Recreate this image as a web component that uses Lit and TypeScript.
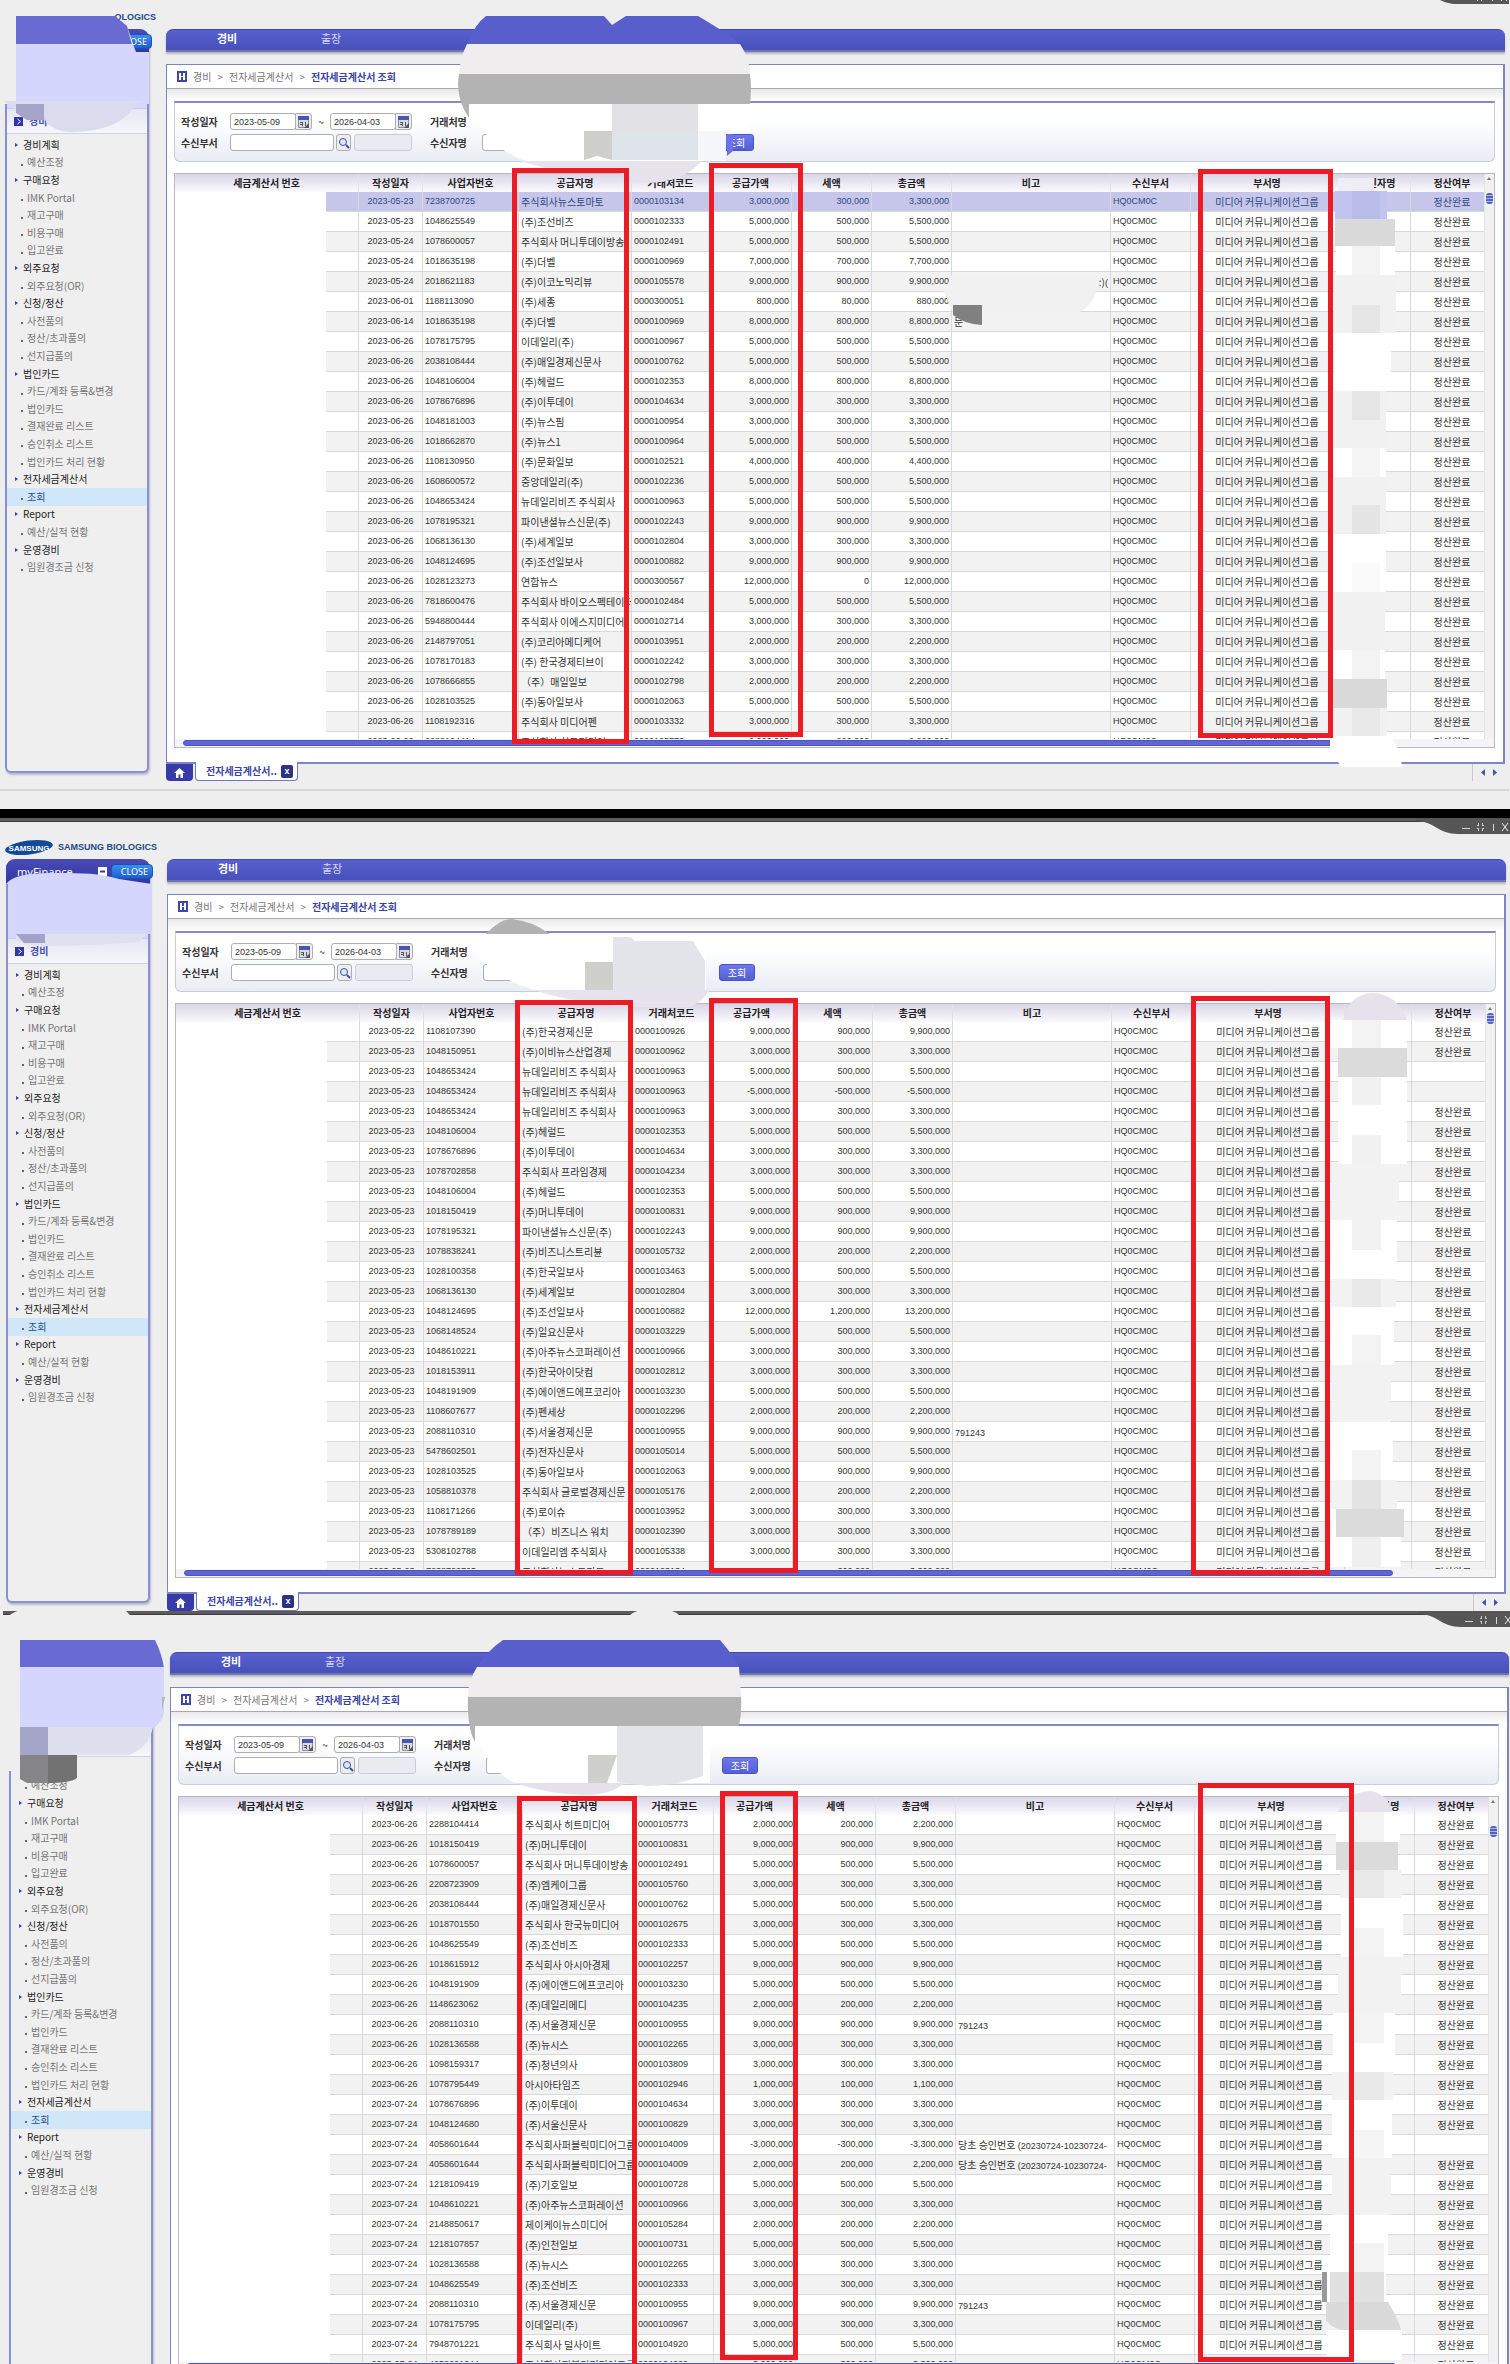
import { LitElement, html, css, svg, nothing } from "lit";
import { customElement, property } from "lit/decorators.js";
import { classMap } from "lit/directives/class-map.js";
import { styleMap } from "lit/directives/style-map.js";

interface Invoice {
  date: string;
  biz: string;
  name: string;
  code: string;
  supply: number;
  tax: number;
  note: string;
  noteEnd: boolean;
  settled: boolean;
}

const parse = (text: string): Invoice[] =>
  text
    .trim()
    .split("\n")
    .map((line) => {
      const [date, biz, name, code, amount, note = "", flag = ""] = line.split("|");
      const supply = Number(amount) * 1000;
      return {
        date: `2023-${date}`,
        biz,
        name,
        code: `0000${code}`,
        supply,
        tax: flag.includes("free") ? 0 : supply / 10,
        note,
        noteEnd: flag.includes("end"),
        settled: !flag.includes("open"),
      };
    });

const FIRST = parse(`
05-23|7238700725|주식회사뉴스토마토|103134|3000
05-23|1048625549|(주)조선비즈|102333|5000
05-24|1078600057|주식회사 머니투데이방송|102491|5000
05-24|1018635198|(주)더벨|100969|7000
05-24|2018621183|(주)이코노믹리뷰|105578|9000|:)(|end
06-01|1188113090|(주)세종|300051|800
06-14|1018635198|(주)더벨|100969|8000|문
06-26|1078175795|이데일리(주)|100967|5000
06-26|2038108444|(주)매일경제신문사|100762|5000
06-26|1048106004|(주)헤럴드|102353|8000
06-26|1078676896|(주)이투데이|104634|3000
06-26|1048181003|(주)뉴스핌|100954|3000
06-26|1018662870|(주)뉴스1|100964|5000
06-26|1108130950|(주)문화일보|102521|4000
06-26|1608600572|중앙데일리(주)|102236|5000
06-26|1048653424|뉴데일리비즈 주식회사|100963|5000
06-26|1078195321|파이낸셜뉴스신문(주)|102243|9000
06-26|1068136130|(주)세계일보|102804|3000
06-26|1048124695|(주)조선일보사|100882|9000
06-26|1028123273|연합뉴스|300567|12000||free
06-26|7818600476|주식회사 바이오스펙테이터|102484|5000
06-26|5948800444|주식회사 이에스지미디어|102714|3000
06-26|2148797051|(주)코리아메디케어|103951|2000
06-26|1078170183|(주) 한국경제티브이|102242|3000
06-26|1078666855|（주）매일일보|102798|2000
06-26|1028103525|(주)동아일보사|102063|5000
06-26|1108192316|주식회사 미디어펜|103332|3000
06-26|2288104414|주식회사 히트미디어|105773|2000
`);

const SECOND = parse(`
05-22|1108107390|(주)한국경제신문|100926|9000
05-23|1048150951|(주)이비뉴스산업경제|100962|3000
05-23|1048653424|뉴데일리비즈 주식회사|100963|5000||open
05-23|1048653424|뉴데일리비즈 주식회사|100963|-5000||open
05-23|1048653424|뉴데일리비즈 주식회사|100963|3000
05-23|1048106004|(주)헤럴드|102353|5000
05-23|1078676896|(주)이투데이|104634|3000
05-23|1078702858|주식회사 프라임경제|104234|3000
05-23|1048106004|(주)헤럴드|102353|5000
05-23|1018150419|(주)머니투데이|100831|9000
05-23|1078195321|파이낸셜뉴스신문(주)|102243|9000
05-23|1078838241|(주)비즈니스트리뷴|105732|2000
05-23|1028100358|(주)한국일보사|103463|5000
05-23|1068136130|(주)세계일보|102804|3000
05-23|1048124695|(주)조선일보사|100882|12000
05-23|1068148524|(주)일요신문사|103229|5000
05-23|1048610221|(주)아주뉴스코퍼레이션|100966|3000
05-23|1018153911|(주)한국아이닷컴|102812|3000
05-23|1048191909|(주)에이앤드에프코리아|103230|5000
05-23|1108607677|(주)펜세상|102296|2000
05-23|2088110310|(주)서울경제신문|100955|9000|791243
05-23|5478602501|(주)전자신문사|105014|5000
05-23|1028103525|(주)동아일보사|102063|9000
05-23|1058810378|주식회사 글로벌경제신문|105176|2000
05-23|1108171266|(주)로이슈|103952|3000
05-23|1078789189|（주）비즈니스 워치|102390|3000
05-23|5308102788|이데일리엠 주식회사|105338|3000
05-23|7238700725|주식회사뉴스토마토|103134|3000
`);

const THIRD = parse(`
06-26|2288104414|주식회사 히트미디어|105773|2000
06-26|1018150419|(주)머니투데이|100831|9000
06-26|1078600057|주식회사 머니투데이방송|102491|5000
06-26|2208723909|(주)엠케이그룹|105760|3000
06-26|2038108444|(주)매일경제신문사|100762|5000
06-26|1018701550|주식회사 한국뉴미디어|102675|3000
06-26|1048625549|(주)조선비즈|102333|5000
06-26|1018615912|주식회사 아시아경제|102257|9000
06-26|1048191909|(주)에이앤드에프코리아|103230|5000
06-26|1148623062|(주)데일리메디|104235|2000
06-26|2088110310|(주)서울경제신문|100955|9000|791243
06-26|1028136588|(주)뉴시스|102265|3000
06-26|1098159317|(주)청년의사|103809|3000
06-26|1078795449|아시아타임즈|102946|1000
07-24|1078676896|(주)이투데이|104634|3000
07-24|1048124680|(주)서울신문사|100829|3000
07-24|4058601644|주식회사퍼블릭미디어그룹|104009|-3000|당초 승인번호 (20230724-10230724-|open
07-24|4058601644|주식회사퍼블릭미디어그룹|104009|2000|당초 승인번호 (20230724-10230724-
07-24|1218109419|(주)기호일보|100728|5000
07-24|1048610221|(주)아주뉴스코퍼레이션|100966|3000
07-24|2148850617|제이케이뉴스미디어|105284|2000
07-24|1218107857|(주)인천일보|100731|5000
07-24|1028136588|(주)뉴시스|102265|3000
07-24|1048625549|(주)조선비즈|102333|3000
07-24|2088110310|(주)서울경제신문|100955|9000|791243
07-24|1078175795|이데일리(주)|100967|3000
07-24|7948701221|주식회사 덜사이트|104920|5000
07-24|4058601644|주식회사퍼블릭미디어그룹|104009|3000
`);

const MENU: Array<[string, string[]]> = [
  ["경비계획", ["예산조정"]],
  ["구매요청", ["IMK Portal", "재고구매", "비용구매", "입고완료"]],
  ["외주요청", ["외주요청(OR)"]],
  ["신청/정산", ["사전품의", "정산/초과품의", "선지급품의"]],
  ["법인카드", ["카드/계좌 등록&변경", "법인카드", "결재완료 리스트", "승인취소 리스트", "법인카드 처리 현황"]],
  ["전자세금계산서", ["조회"]],
  ["Report", ["예산/실적 현황"]],
  ["운영경비", ["임원경조금 신청"]],
];

const COLUMNS = [
  "세금계산서 번호", "작성일자", "사업자번호", "공급자명", "거래처코드", "공급가액",
  "세액", "총금액", "비고", "수신부서", "부서명", "수신자명", "정산여부",
];

const money = (n: number) => n.toLocaleString("en-US");

/* Digits in a remark take the compact numeral size, the words keep theirs. */
const remark = (note: string) => {
  const [, words, digits] = /^([^\d(]*)(.*)$/.exec(note)!;
  return html`${words}${digits ? html`<span class="fig">${digits}</span>` : nothing}`;
};

@customElement("finance-window")
export class FinanceWindow extends LitElement {
  @property({ attribute: false }) rows: Invoice[] = [];
  @property({ type: Number }) selected = -1;
  @property({ type: Number }) thumb = 10;
  @property({ type: Boolean }) invert = false;
  @property({ type: Boolean }) status = false;

  static styles = css`
    :host {
      display: block;
      position: relative;
      background: #eeeeee;
      color: #333;
      font: 10px/20px "Noto Sans CJK KR", sans-serif;
      --line: #d9d9d9;
    }
    * { box-sizing: border-box; }
    a { color: inherit; text-decoration: none; }
    .strip { height: 4px; background: #5c5c5c; border-bottom: 1px solid #3c3c3c; }
    .controls { position: absolute; top: 0; right: 0; width: 94px; height: 16px; }
    .layout { display: flex; align-items: flex-start; gap: 17px; padding: 0 4px 0 6px; }
    .side { flex: none; width: 144px; }
    .brand { display: flex; align-items: center; gap: 5px; height: 37px; padding-top: 13px; color: #1b4a87; font: 700 9px/16px "Liberation Sans", sans-serif; white-space: nowrap; }
    .brand svg { flex: none; margin-left: -1px; }
    .panel { height: 744px; border: 2px solid #8b90d6; border-top: 0; border-radius: 9px 9px 6px 6px; background: #efefef; box-shadow: 1px 2px 2px #b9b9cc; }
    .head { display: flex; align-items: center; gap: 4px; height: 25px; margin: 0 -2px; padding: 0 0 0 11px; border-radius: 9px 9px 0 0; background: linear-gradient(#4a4cb4, #2f35a4); color: #fff; font: 11px/20px "Noto Sans", sans-serif; }
    .head .grow { flex: 1; }
    .close { height: 15px; margin-right: -3px; padding: 0 4px 0 9px; border: 1px solid #1b50b8; border-radius: 4px; background: linear-gradient(#3f8df0, #1c5fd0); color: #fff; font: 9px/12px "Noto Sans", sans-serif; }
    .greet { height: 54px; background: #d5d7fe; }
    .section { display: flex; align-items: center; gap: 6px; height: 26px; padding-left: 7px; border-top: 1px solid #cccde4; border-bottom: 1px solid #cfd3e2; background: linear-gradient(#e6e6f4, #f6f6fb); color: #4650b0; font-weight: 700; }
    .menu { display: grid; grid-auto-rows: 1fr; height: 440px; margin: 2px 0 0; padding: 0; list-style: none; }
    .menu li { display: flex; align-items: center; padding-left: 20px; color: #757575; line-height: 16px; }
    .menu li::before { content: ""; width: 2px; height: 2px; margin: 5px 4px 0 -6px; background: #666; }
    .menu li.top { padding-left: 16px; color: #222; }
    .menu li.top::before { width: 0; height: 0; margin: 0 5px 0 -8px; border: 2px solid transparent; border-left: 3px solid #3a3fae; border-right: 0; background: none; }
    .menu li.on { background: #cfe7f8; color: #1f4b8f; }
    .main { flex: 1; min-width: 0; padding-top: 37px; }
    .nav { display: flex; height: 23px; padding-left: 51px; border-top: 1px solid #4349a8; border-bottom: 2px solid #6f74b4; border-radius: 7px 7px 0 0; background: linear-gradient(#5860cf, #4850ba); box-shadow: 0 2px 2px #b5b5bd; color: #d8daf6; font-size: 11px; line-height: 17px; }
    .nav a { width: 104px; }
    .nav a.on { color: #fff; font-weight: 700; }
    .frame { margin-top: 12px; height: 700px; border: 1px solid #7f84c2; border-width: 1px 2px 2px 1px; background: #fff; }
    .crumbs { display: flex; align-items: center; gap: 6px; height: 24px; padding-left: 10px; border-bottom: 1px solid #a9a9ad; color: #777; }
    .crumbs b { color: #3a43a5; }
    .content { padding: 12px 8px 0 7px; background: linear-gradient(#e9e9eb, #fff 12px); }
    .search { display: grid; grid-template-columns: 49px 182px 70px 223px auto; grid-auto-rows: 17px; row-gap: 4px; align-items: center; height: 61px; padding: 10px 0 0 6px; border: 1px solid #c9ccda; border-top: 2px solid #858ac0; border-radius: 0 0 6px 6px; background: linear-gradient(#fff 30%, #e9ecf4); }
    .search label { font-weight: 700; }
    .search .second { padding-left: 18px; }
    .field { display: flex; align-items: center; height: 17px; }
    input { width: 66px; height: 17px; margin: 0; padding: 0 3px; border: 1px solid #adadb3; border-radius: 3px; background: #fff; color: #333; font: 9px/14px "Liberation Sans", sans-serif; }
    input:disabled { width: 58px; margin-left: 3px; border-color: #c9ccd6; background: #e9ebf0; }
    input.wide { width: 104px; }
    input.long { width: 223px; }
    .icon { display: flex; align-items: center; justify-content: center; width: 17px; height: 17px; margin-left: -1px; padding: 0; border: 1px solid #adadb3; border-radius: 0 3px 3px 0; background: #eee; }
    .icon.find { width: 16px; margin-left: 2px; border-radius: 3px; }
    .tilde { width: 18px; text-align: center; }
    .go { justify-self: start; width: 36px; height: 17px; margin-left: 13px; padding: 0; border: 1px solid #4a53c4; border-radius: 3px; background: linear-gradient(#6d78ea, #5560d8); color: #fff; font: 10px/14px "Noto Sans CJK KR", sans-serif; }
    .gridbox { position: relative; margin-top: 11px; border: 1px solid #b8b8c4; }
    .viewport { height: 565px; overflow: hidden; }
    table { width: 100%; table-layout: fixed; border-collapse: separate; border-spacing: 0; }
    th { height: 18px; padding: 0; border-right: 1px solid #e3e0ec; background: linear-gradient(#d9d5e8, #fbfafd); color: #222; font-weight: 700; line-height: 18px; }
    td { height: 20px; padding: 0 2px; overflow: hidden; border-right: 1px solid var(--line); border-bottom: 1px solid var(--line); line-height: 19px; white-space: nowrap; }
    td.mid { padding: 0; text-align: center; }
    td.num { text-align: right; }
    .num, .fig { font-family: "Liberation Sans", sans-serif; font-size: 9px; }
    span.fig { line-height: 10px; }
    td.end { text-align: right; }
    td.no { border-bottom: 0; background: linear-gradient(#fff, #fff) 0 0 / 151px 100% no-repeat, linear-gradient(var(--line), var(--line)) 0 100% / 100% 1px no-repeat; }
    tr.alt { background: #f2f2f2; }
    tr.sel { background: #c5c6e9; color: #2f4684; }
    .w-no { width: 184px; } .w-date { width: 64px; } .w-biz { width: 96px; } .w-name { width: 113px; }
    .w-code { width: 78px; } .w-sup { width: 82px; } .w-amt { width: 80px; } .w-dept { width: 80px; }
    .w-group { width: 153px; } .w-recv { width: 67px; } .w-state { width: 83px; }
    .vbar { position: absolute; top: 0; right: 0; bottom: 8px; width: 10px; padding-top: 9px; background: #f1f1f1; border-left: 1px solid #e4e4e4; }
    .vbar::before { content: ""; position: absolute; top: 3px; left: 2px; border: 2px solid transparent; border-bottom: 3px solid #777; border-top: 0; }
    .vthumb { width: 7px; height: 11px; margin-left: 1px; border-radius: 3px; background: repeating-linear-gradient(#4f63c0 0 2px, #aab4ea 2px 3px); }
    .hbar { display: flex; height: 8px; padding: 1px 102px 1px 8px; background: #f4f4f6; }
    .hthumb { flex: 1; border-radius: 3px; background: #5f66d4; border: 1px solid #4d54c0; }
    .tabs { display: flex; align-items: stretch; height: 17px; }
    .home { display: flex; align-items: center; justify-content: center; width: 27px; border-radius: 0 0 4px 4px; background: #363ba8; }
    .tab { display: flex; align-items: center; gap: 4px; margin-top: -2px; margin-left: 2px; padding: 0 4px 0 10px; border: 1px solid #7277b8; border-top: 0; border-radius: 0 0 4px 4px; background: #fff; color: #3a43a5; font-weight: 700; }
    .x { width: 12px; height: 13px; padding: 0; border: 0; border-radius: 2px; background: #2c3284; color: #fff; font: 700 9px/13px "Liberation Sans", sans-serif; }
    .pager { display: flex; align-items: center; gap: 8px; margin-left: auto; padding: 0 8px; border-left: 1px solid #c9c9c9; }
    .status { height: 20px; margin-top: 8px; border-top: 2px solid #d7d7d7; }
  `;

  private calendar(label: string) {
    return html`<button class="icon" type="button" aria-label=${label}>
      <svg width="11" height="12" viewBox="0 0 11 12">
        <path fill="#d8dae4" stroke="#8a8da0" d="M.5.5h10v11H.5z" />
        <path fill="#4a55ad" d="M0 0h11v4H0z" />
        <path stroke="#555" d="M2 6.500h3M4.500 6v4M2 8.500h2M7.500 6v4" />
        <path fill="#555" d="M11 7v5H6z" />
      </svg>
    </button>`;
  }

  private row(r: Invoice, i: number) {
    const alt = i !== this.selected && i % 2 === (this.invert ? 0 : 1);
    return html`<tr class=${classMap({ alt, sel: i === this.selected })}>
      <td class="no"></td>
      <td class="mid fig">${r.date}</td>
      <td class="fig">${r.biz}</td>
      <td>${r.name}</td>
      <td class="fig">${r.code}</td>
      <td class="num">${money(r.supply)}</td>
      <td class="num">${money(r.tax)}</td>
      <td class="num">${money(r.supply + r.tax)}</td>
      <td class=${classMap({ end: r.noteEnd })}>${r.note ? remark(r.note) : nothing}</td>
      <td class="fig">HQ0CM0C</td>
      <td class="mid">미디어 커뮤니케이션그룹</td>
      <td></td>
      <td class="mid">${r.settled ? "정산완료" : nothing}</td>
    </tr>`;
  }

  render() {
    return html`
      <div class="strip"></div>
      <svg class="controls" viewBox="0 0 94 16" aria-hidden="true">
        <path fill="#565656" d="M0 3c18 0 22 13 42 13h52V0H0z" />
        <path stroke="#d5d5d5" d="M46 10.500h8M77.500 6v7" />
        <path stroke="#c9c9c9" d="M62.500 5v3M62.500 10v3M66.500 5v3M66.500 10v3M61 7.500h2M66 7.500h2M61 10.500h2M66 10.500h2" />
        <path stroke="#eee" d="M86 5l6 8M92 5l-6 8" />
      </svg>
      <div class="layout">
        <div class="side">
          <div class="brand">
            <svg width="48" height="17" viewBox="0 0 48 17">
              <ellipse cx="24" cy="8.500" rx="24" ry="7" fill="#134a97" transform="rotate(-7 24 8.500)" />
              <text x="24" y="11.500" text-anchor="middle" fill="#fff" font-family="Liberation Sans" font-weight="700" font-size="8">SAMSUNG</text>
            </svg>
            <span>SAMSUNG BIOLOGICS</span>
          </div>
          <aside class="panel">
            <div class="head">
              <span>myFinance</span><span class="grow"></span>
              <svg width="9" height="9"><path fill="#fff" d="M0 0h9v9H0z" /><path stroke="#333a9c" stroke-width="2" d="M2 4.500h5" /></svg>
              <button class="close" type="button">CLOSE</button>
            </div>
            <div class="greet"></div>
            <div class="section">
              <svg width="9" height="9"><path fill="#3137a8" d="M0 0h9v9H0z" /><path fill="none" stroke="#fff" d="M3.500 2l3 2.500-3 2.500" /></svg>
              <span>경비</span>
            </div>
            <ul class="menu">
              ${MENU.map(
                ([title, items]) => html`
                  <li class="top"><a href="#">${title}</a></li>
                  ${items.map((t) => html`<li class=${classMap({ on: t === "조회" })}><a href="#">${t}</a></li>`)}
                `,
              )}
            </ul>
          </aside>
        </div>
        <main class="main">
          <nav class="nav"><a class="on" href="#">경비</a><a href="#">출장</a></nav>
          <section class="frame">
            <div class="crumbs">
              <svg width="10" height="11"><path fill="#3f48a8" d="M0 0h10v11H0z" /><path stroke="#fff" stroke-width="2" d="M3 2v7M7 2v7" /><path stroke="#fff" d="M3 5.500h4" /></svg>
              <a href="#">경비</a><span>&gt;</span><a href="#">전자세금계산서</a><span>&gt;</span><b>전자세금계산서 조회</b>
            </div>
            <div class="content">
              <form class="search">
                <label for="from">작성일자</label>
                <div class="field">
                  <input id="from" value="2023-05-09" />${this.calendar("시작일 선택")}
                  <span class="tilde">~</span>
                  <input aria-label="종료일" value="2026-04-03" />${this.calendar("종료일 선택")}
                </div>
                <label class="second" for="vendor">거래처명</label>
                <div class="field"><input class="long" id="vendor" /></div>
                <span></span>
                <label for="dept">수신부서</label>
                <div class="field">
                  <input class="wide" id="dept" />
                  <button class="icon find" aria-label="부서 검색" type="button">
                    <svg width="12" height="12"><circle cx="5" cy="5" r="3.500" fill="#dfe8fb" stroke="#3c4fa0" /><path stroke="#3c4fa0" stroke-width="2" d="M8 8l3 3" /></svg>
                  </button>
                  <input aria-label="부서명" disabled />
                </div>
                <label class="second" for="recv">수신자명</label>
                <div class="field"><input class="long" id="recv" /></div>
                <button class="go" type="button">조회</button>
              </form>
              <div class="gridbox">
                <div class="viewport">
                  <table>
                    <colgroup>
                      <col class="w-no" /><col class="w-date" /><col class="w-biz" /><col class="w-name" />
                      <col class="w-code" /><col class="w-sup" /><col class="w-amt" /><col class="w-amt" />
                      <col /><col class="w-dept" /><col class="w-group" /><col class="w-recv" /><col class="w-state" />
                    </colgroup>
                    <thead><tr>${COLUMNS.map((c) => html`<th scope="col">${c}</th>`)}</tr></thead>
                    <tbody>${this.rows.map((r, i) => this.row(r, i))}</tbody>
                  </table>
                </div>
                <div class="hbar"><div class="hthumb"></div></div>
                <div class="vbar"><div class="vthumb" style=${styleMap({ marginTop: `${this.thumb}px` })}></div></div>
              </div>
            </div>
          </section>
          <div class="tabs">
            <a class="home" href="#" aria-label="홈">
              <svg width="11" height="10"><path fill="#fff" d="M5.500 0L0 5h2v5h2.500V6.500h2V10H9V5h2z" /></svg>
            </a>
            <div class="tab"><span>전자세금계산서..</span><button class="x" type="button" aria-label="닫기">x</button></div>
            <div class="pager">
              <svg width="4" height="7"><path fill="#4650b0" d="M4 0v7L0 3.500z" /></svg>
              <svg width="4" height="7"><path fill="#4650b0" d="M0 0v7l4-3.500z" /></svg>
            </div>
          </div>
        </main>
      </div>
      ${this.status ? html`<div class="status"></div>` : nothing}
    `;
  }
}

type Box = [number, number, number, number, string];

/* x, y, width, height, fill of the blocks that hide the recipient column */
const COVER: Box[] = [
  [1335, 191, 52, 28, "#c1c4ef"], [1352, 191, 28, 28, "#b9bce8"],
  [1335, 219, 60, 27, "#dadada"],
  [1336, 246, 59, 29, "#fff"], [1352, 246, 28, 29, "#f3f3f3"],
  [1334, 275, 62, 58, "#f1f1f1"], [1352, 305, 28, 28, "#e6e6e6"],
  [1334, 333, 57, 58, "#fff"],
  [1333, 391, 53, 57, "#f1f1f1"], [1352, 391, 28, 29, "#e6e6e6"],
  [1333, 448, 53, 29, "#fff"], [1352, 448, 28, 29, "#f5f5f5"],
  [1333, 477, 53, 57, "#f1f1f1"], [1352, 505, 28, 29, "#e5e5e5"],
  [1333, 534, 53, 58, "#fff"], [1352, 563, 28, 29, "#fafafa"],
  [1333, 592, 52, 58, "#f1f1f1"],
  [1333, 650, 52, 29, "#fff"], [1352, 650, 28, 29, "#f3f3f3"],
  [1333, 679, 54, 29, "#dadada"],
  [1333, 708, 54, 28, "#f1f1f1"], [1352, 708, 28, 28, "#e8e8e8"],

  [1330, 1020, 77, 28, "#fff"], [1352, 1020, 29, 28, "#f3f3f3"],
  [1338, 1048, 69, 29, "#dbdbdb"],
  [1338, 1077, 69, 87, "#fff"], [1352, 1077, 29, 28, "#f1f1f1"], [1352, 1135, 29, 29, "#f1f1f1"],
  [1331, 1164, 68, 56, "#f2f2f2"],
  [1331, 1220, 66, 59, "#fff"], [1352, 1220, 29, 30, "#f2f2f2"],
  [1331, 1279, 65, 28, "#f2f2f2"], [1352, 1279, 29, 28, "#e8e8e8"],
  [1331, 1307, 63, 58, "#fff"], [1352, 1335, 29, 30, "#f3f3f3"],
  [1331, 1365, 60, 57, "#f2f2f2"],
  [1331, 1422, 62, 58, "#fff"], [1352, 1450, 29, 30, "#f4f4f4"],
  [1331, 1480, 66, 29, "#f2f2f2"], [1352, 1480, 29, 29, "#e3e3e3"],
  [1331, 1509, 70, 28, "#fff"], [1336, 1509, 68, 28, "#dbdbdb"],
  [1331, 1537, 70, 30, "#fff"], [1352, 1537, 29, 30, "#efefef"],

  [1336, 1812, 64, 30, "#fff"], [1350, 1812, 34, 30, "#f3f3f3"],
  [1336, 1842, 62, 28, "#dbdbdb"],
  [1340, 1870, 61, 28, "#f2f2f2"], [1352, 1870, 32, 28, "#e8e8e8"],
  [1341, 1898, 62, 59, "#fff"], [1352, 1928, 32, 29, "#f3f3f3"],
  [1338, 1957, 63, 56, "#f2f2f2"],
  [1333, 2013, 62, 59, "#fff"], [1352, 2013, 32, 30, "#f3f3f3"],
  [1332, 2072, 61, 28, "#f2f2f2"], [1352, 2072, 32, 28, "#e8e8e8"],
  [1332, 2100, 60, 58, "#fff"], [1352, 2130, 32, 28, "#f5f5f5"],
  [1332, 2158, 59, 57, "#f2f2f2"],
  [1330, 2215, 58, 57, "#fff"], [1352, 2243, 32, 29, "#f3f3f3"],
  [1326, 2272, 60, 30, "#fff"], [1330, 2272, 54, 30, "#e1e1e1"], [1322, 2272, 5, 30, "#999"],
  [1326, 2330, 76, 30, "#fff"],
];

/* x, y, width, height of the red frames */
const MARKS: Array<[number, number, number, number]> = [
  [512, 168, 117, 576], [709, 163, 94, 574], [1198, 169, 135, 569],
  [515, 1000, 118, 575], [709, 998, 89, 575], [1191, 996, 139, 579],
  [517, 1796, 120, 573], [720, 1791, 78, 569], [1198, 1783, 156, 579],
];

@customElement("app-root")
export class AppRoot extends LitElement {
  static styles = css`
    :host { display: block; }
    .page { position: relative; height: 100vh; overflow: hidden; background: #eee; }
    .first { height: 809px; overflow: hidden; }
    .first finance-window { margin: -12px 1px 0 -1px; }
    .divider { height: 9px; background: #000; }
    .second { height: 793px; }
    .third { margin: 0 -3px 0 3px; }
    .overlay { position: absolute; top: 0; left: 0; pointer-events: none; }
  `;

  private covers() {
    return svg`
      <path fill="#eeeeee" d="M0 0h115v26h12l6 18h-117v60H0z" />
      <path fill="#696bd2" d="M16 16h99l12 10 5 19H16z" />
      <path fill="#d4d6fe" d="M16 44h117l3 8h13v52H16z" />
      <path fill="#dadcee" d="M4 101h144l-14 4c-6 16-30 27-63 27-12 0-16-4-24-8l-3-7-24-4z" />
      <path fill="#a4a5c8" d="M16 104h28v16H27L16 113z" />

      <path fill="#585fcc" d="M486 16h118l8 9 14-9h72q34 20 42 28H467q8-20 19-28z" />
      <path fill="#efedee" d="M467 44h273q10 15 10 30H459q1-16 8-30z" />
      <path fill="#b3b3b3" d="M459 74h291q2 14 0 30H469v14q-14-20-10-44z" />
      <path fill="#fff" d="M470 104h280v27h-24v30H525q-42-16-55-57z" />
      <path fill="#e1e1e6" d="M612 104h86v27h-86z" />
      <path fill="#dfe3ea" d="M612 131h86v29h-86z" />
      <path fill="#f5f7fa" d="M698 131h28v29h-28z" />
      <path fill="#cfd0cb" d="M584 131h28v29l-15-4-13 4z" />
      <path fill="#e6e3ec" d="M520 161h182q-20 22-56 22-14-2-34-15H545z" />
      <path fill="#6a74e6" d="M727 134h6v17l-6 5z" />

      <path fill="#f1f1f1" d="M952 275h146v12q-6 20-20 26h-96v10l-30-12-8-20z" />
      <path fill="#808080" d="M953 305h29v20q-18-1-29-10z" />
      <path fill="#efedf5" d="M1338 191v-13h36v13z" />
      <path fill="#fff" d="M1330 736h60q10 12 12 31h-60q-4-7-12-8z" />

      <path fill="#d4d6fe" d="M6 884q8-12 52-11 40-1 61 6l33 5v50H16v-50z" />
      <path fill="#e0e1ee" d="M16 934h131l-8 8q-50 4-95 4-20 0-28-7z" />
      <path fill="#a1a2c8" d="M16 934h29v9H24z" />
      <path fill="#b1b1b1" d="M486 934q14-15 26-15 20 2 38 15z" />
      <path fill="#fff" d="M480 934h226v56H534q-40-12-60-40z" />
      <path fill="#e4e5ea" d="M613 937h17l5 4h58l12 20v30h-92z" />
      <path fill="#cfd0cb" d="M585 962h28v28h-28z" />
      <path fill="#e6e3ee" d="M534 990h176q-8 12-20 17h-58q-60-4-98-17z" />
      <path fill="#e5e2ec" d="M1343 1020q6-26 30-27 24 1 34 27z" />

      <path fill="#eee" d="M0 1623q10-10 20-13h105l6 6h33v101h-11q-3 20-20 28H77v20q-10 10-20 8l-36-2H0z" />
      <path fill="#696bd2" d="M20 1640h135q7 14 9 28H20z" />
      <path fill="#d4d6fe" d="M20 1667h144v46q-2 8-9 14H20z" />
      <path fill="#b5b5bb" d="M162 1697h3l-3 14z" />
      <path fill="#dfe0ed" d="M20 1727h133q-4 20-24 28H20z" />
      <path fill="#a4a5c8" d="M20 1727h28v28H20z" />
      <path fill="#858587" d="M20 1755h28v28H27l-7-4z" />
      <path fill="#727272" d="M48 1755h29v23q-6 5-29 5z" />

      <path fill="#eee" d="M630 1615q6-6 24-5 20-1 25 5z" />
      <path fill="#585fcc" d="M503 1640h217q14 16 19 27H477q10-16 26-27z" />
      <path fill="#efedee" d="M477 1667h262l2 30H468q0-16 9-30z" />
      <path fill="#b3b3b3" d="M468 1697h273q1 16-2 29H475v16q-8-14-7-45z" />
      <path fill="#fff" d="M475 1726h235v57H515q-30-14-40-57z" />
      <path fill="#e3e4ea" d="M617 1726h86v50q-30 10-56 10l-30-4z" />
      <path fill="#cfd0cb" d="M588 1755h29l-10 28h-19z" />
      <path fill="#e5e0ec" d="M515 1783h110q-15 12-39 12-40-1-71-12z" />
      <path fill="#e5e2ec" d="M1338 1812q8-20 33-21 18 4 21 21z" />
      <path fill="#dadada" d="M1326 2302h62q10 16 13 28h-60q-12-4-15-10z" />
      ${COVER.map(([x, y, w, h, fill]) => svg`<rect x=${x} y=${y} width=${w} height=${h} fill=${fill} />`)}
    `;
  }

  render() {
    return html`
      <div class="page">
        <div class="first">
          <finance-window .rows=${FIRST} .selected=${0} .thumb=${10} .invert=${true} .status=${true}></finance-window>
        </div>
        <div class="divider"></div>
        <finance-window class="second" .rows=${SECOND} .thumb=${0}></finance-window>
        <finance-window class="third" .rows=${THIRD} .thumb=${20}></finance-window>
        <svg class="overlay" width="1510" height="2364" viewBox="0 0 1510 2364" aria-hidden="true">
          ${this.covers()}
          ${MARKS.map(
            ([x, y, w, h]) => svg`<path fill="#ed1c24" fill-rule="evenodd"
              d="M${x} ${y}h${w}v${h}h${-w}zM${x + 5} ${y + 5}v${h - 10}h${w - 10}v${10 - h}z" />`,
          )}
        </svg>
      </div>
    `;
  }
}
